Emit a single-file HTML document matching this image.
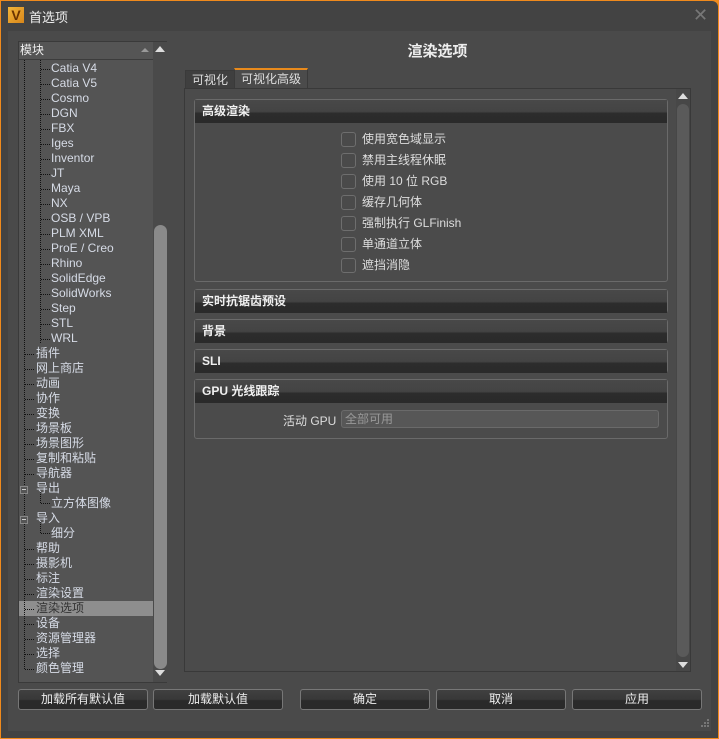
<!DOCTYPE html><html><head><meta charset="utf-8"><style>
*{margin:0;padding:0;box-sizing:border-box}
body{width:719px;height:739px;background:#f08a1c;font-family:"Liberation Sans","Noto Sans CJK SC",sans-serif;font-size:12px;color:#ddd;overflow:hidden;position:relative}
.a{position:absolute}
#win{left:1px;top:1px;width:717px;height:737px;background:#434343;border-radius:0 6px 0 0}
#body{left:8px;top:31px;width:703px;height:700px;background:#4a4a4a}
.tree{left:18px;top:41px;width:149px;height:642px;background:#545454;border:1px solid #3a3a3a}
.hdr{left:0;top:0;width:134px;height:18px;background:#555;border-bottom:1px solid #3c3c3c;padding-left:1px;line-height:17px;font-size:12px;color:#eee}
.it{position:absolute;height:15px;line-height:15px;font-size:12px;color:#d6dbe6;white-space:nowrap}
.sel{left:0;top:559px;width:134px;height:15px;background:#8e8e8e}
.sb{left:134px;top:0;width:14px;height:640px;background:#4a4a4a}
.thumb{left:135px;top:183px;width:13px;height:444px;background:#8a8a8a;border-radius:7px}
.tri-u{width:0;height:0;border-left:5px solid transparent;border-right:5px solid transparent;border-bottom:6px solid #ddd}
.tri-d{width:0;height:0;border-left:5px solid transparent;border-right:5px solid transparent;border-top:6px solid #ddd}
.tab{height:20px;line-height:19px;padding:0 6px;font-size:12px;border:1px solid #3a3a3a;border-bottom:none}
.panel{left:184px;top:88px;width:507px;height:584px;border:1px solid #393939;background:#4b4b4b}
.sec{position:absolute;left:9px;width:474px;border:1px solid #6a6a6a;border-radius:3px}
.sh{height:23px;background:linear-gradient(#484848 0,#444 50%,#2c2c2c 58%,#2a2a2a 100%);font-weight:bold;color:#f0f0f0;padding-left:7px;line-height:22px;font-size:12px}
.cb{position:absolute;left:146px;width:15px;height:15px;border:1px solid #6e6e6e;border-radius:3px;background:#4a4a4a}
.cl{position:absolute;left:167px;font-size:12px;color:#ddd;line-height:15px}
.btn{position:absolute;top:689px;width:130px;height:21px;border:1px solid #777;border-radius:3px;background:linear-gradient(#404040,#383838 50%,#2a2a2a 55%,#2a2a2a);text-align:center;line-height:19px;color:#eee;font-size:12px}
</style></head><body>
<div class="a" id="win"></div>
<div class="a" style="left:8px;top:7px;width:16px;height:16px;background:linear-gradient(135deg,#f2b53a,#d8861a);color:#6a3300;font-weight:bold;font-size:14px;line-height:16px;text-align:center">V</div>
<div class="a" style="left:29px;top:7px;font-size:13px;color:#eee">首选项</div>
<div class="a" style="left:693px;top:6px;font-size:18px;color:#777;line-height:18px">✕</div>
<div class="a" id="body"></div>

<div class="a tree">
<div class="a hdr">模块<div class="a tri-u" style="left:122px;top:6px;border-bottom-color:#999;border-left-width:4px;border-right-width:4px;border-bottom-width:4px"></div></div>
<div class="a sb"></div><div class="a thumb"></div>
<div class="a tri-u" style="left:136px;top:4px"></div>
<div class="a tri-d" style="left:136px;top:628px"></div>
<div class="a sel"></div>
<svg class="a" style="left:0;top:18px" width="134" height="622" fill="none" stroke="#111" stroke-dasharray="1,1">
<path d="M5.5 0V609.5H16"/>
<path d="M21.5 0V283"/>
<path d="M22 9.5h9M22 24.5h9M22 39.5h9M22 54.5h9M22 69.5h9M22 84.5h9M22 99.5h9M22 114.5h9M22 129.5h9M22 144.5h9M22 159.5h9M22 174.5h9M22 189.5h9M22 204.5h9M22 219.5h9M22 234.5h9M22 249.5h9M22 264.5h9M22 279.5h9"/>
<path d="M6 294.5h10M6 309.5h10M6 324.5h10M6 339.5h10M6 354.5h10M6 369.5h10M6 384.5h10M6 399.5h10M6 414.5h10M6 534.5h10M6 549.5h10M6 564.5h10M6 579.5h10M6 594.5h10M6 504.5h10M6 519.5h10M6 489.5h10"/>
<path d="M21.5 432V443.5H31M21.5 462V473.5H31"/>
</svg>
<div class="a" style="left:1px;top:444px;width:8px;height:8px;border:1px solid #888;background:#555"><div class="a" style="left:1px;top:2px;width:4px;height:1px;background:#ccc"></div></div>
<div class="a" style="left:1px;top:474px;width:8px;height:8px;border:1px solid #888;background:#555"><div class="a" style="left:1px;top:2px;width:4px;height:1px;background:#ccc"></div></div>
<div class="it" style="left:32px;top:19px">Catia V4</div>
<div class="it" style="left:32px;top:34px">Catia V5</div>
<div class="it" style="left:32px;top:49px">Cosmo</div>
<div class="it" style="left:32px;top:64px">DGN</div>
<div class="it" style="left:32px;top:79px">FBX</div>
<div class="it" style="left:32px;top:94px">Iges</div>
<div class="it" style="left:32px;top:109px">Inventor</div>
<div class="it" style="left:32px;top:124px">JT</div>
<div class="it" style="left:32px;top:139px">Maya</div>
<div class="it" style="left:32px;top:154px">NX</div>
<div class="it" style="left:32px;top:169px">OSB / VPB</div>
<div class="it" style="left:32px;top:184px">PLM XML</div>
<div class="it" style="left:32px;top:199px">ProE / Creo</div>
<div class="it" style="left:32px;top:214px">Rhino</div>
<div class="it" style="left:32px;top:229px">SolidEdge</div>
<div class="it" style="left:32px;top:244px">SolidWorks</div>
<div class="it" style="left:32px;top:259px">Step</div>
<div class="it" style="left:32px;top:274px">STL</div>
<div class="it" style="left:32px;top:289px">WRL</div>
<div class="it" style="left:17px;top:304px">插件</div>
<div class="it" style="left:17px;top:319px">网上商店</div>
<div class="it" style="left:17px;top:334px">动画</div>
<div class="it" style="left:17px;top:349px">协作</div>
<div class="it" style="left:17px;top:364px">变换</div>
<div class="it" style="left:17px;top:379px">场景板</div>
<div class="it" style="left:17px;top:394px">场景图形</div>
<div class="it" style="left:17px;top:409px">复制和粘贴</div>
<div class="it" style="left:17px;top:424px">导航器</div>
<div class="it" style="left:17px;top:439px">导出</div>
<div class="it" style="left:32px;top:454px">立方体图像</div>
<div class="it" style="left:17px;top:469px">导入</div>
<div class="it" style="left:32px;top:484px">细分</div>
<div class="it" style="left:17px;top:499px">帮助</div>
<div class="it" style="left:17px;top:514px">摄影机</div>
<div class="it" style="left:17px;top:529px">标注</div>
<div class="it" style="left:17px;top:544px">渲染设置</div>
<div class="it" style="left:17px;top:559px;color:#333">渲染选项</div>
<div class="it" style="left:17px;top:574px">设备</div>
<div class="it" style="left:17px;top:589px">资源管理器</div>
<div class="it" style="left:17px;top:604px">选择</div>
<div class="it" style="left:17px;top:619px">颜色管理</div>
</div>

<div class="a" style="left:184px;top:40px;width:507px;text-align:center;font-size:15px;font-weight:bold;color:#eee">渲染选项</div>
<div class="a tab" style="left:185px;top:70px;height:18px;background:#3f3f3f;color:#ddd">可视化</div>
<div class="a tab" style="left:234px;top:68px;background:#4b4b4b;border-top:2px solid #e88a1c;color:#ddd;width:74px">可视化高级</div>
<div class="a panel">
<div class="a" style="left:491px;top:0;width:14px;height:582px;background:#474747"></div>
<div class="a" style="left:492px;top:15px;width:12px;height:553px;background:#5a5a5a;border-radius:6px"></div>
<div class="a tri-u" style="left:493px;top:4px"></div>
<div class="a tri-d" style="left:493px;top:573px"></div>
<div class="sec" style="top:10px;height:183px"><div class="sh">高级渲染</div>
<div class="cb" style="top:32px"></div><div class="cl" style="top:32px">使用宽色域显示</div>
<div class="cb" style="top:53px"></div><div class="cl" style="top:53px">禁用主线程休眠</div>
<div class="cb" style="top:74px"></div><div class="cl" style="top:74px">使用 10 位 RGB</div>
<div class="cb" style="top:95px"></div><div class="cl" style="top:95px">缓存几何体</div>
<div class="cb" style="top:116px"></div><div class="cl" style="top:116px">强制执行 GLFinish</div>
<div class="cb" style="top:137px"></div><div class="cl" style="top:137px">单通道立体</div>
<div class="cb" style="top:158px"></div><div class="cl" style="top:158px">遮挡消隐</div>
</div>
<div class="sec" style="top:200px;height:24px"><div class="sh">实时抗锯齿预设</div></div>
<div class="sec" style="top:230px;height:24px"><div class="sh">背景</div></div>
<div class="sec" style="top:260px;height:24px"><div class="sh">SLI</div></div>
<div class="sec" style="top:290px;height:60px"><div class="sh">GPU 光线跟踪</div>
<div class="a" style="left:88px;top:32px;color:#ddd">活动 GPU</div>
<div class="a" style="left:146px;top:30px;width:318px;height:18px;border:1px solid #6a6a6a;border-radius:3px;background:#575757;color:#999;padding-left:3px;line-height:16px">全部可用</div>
</div>
</div>

<div class="btn" style="left:18px">加载所有默认值</div>
<div class="btn" style="left:153px">加载默认值</div>
<div class="btn" style="left:300px">确定</div>
<div class="btn" style="left:436px">取消</div>
<div class="btn" style="left:572px">应用</div>
<svg class="a" style="left:699px;top:719px" width="10" height="10" fill="#777"><rect x="8" y="0" width="2" height="2"/><rect x="5" y="3" width="2" height="2"/><rect x="8" y="3" width="2" height="2"/><rect x="2" y="6" width="2" height="2"/><rect x="5" y="6" width="2" height="2"/><rect x="8" y="6" width="2" height="2"/></svg>
</body></html>
